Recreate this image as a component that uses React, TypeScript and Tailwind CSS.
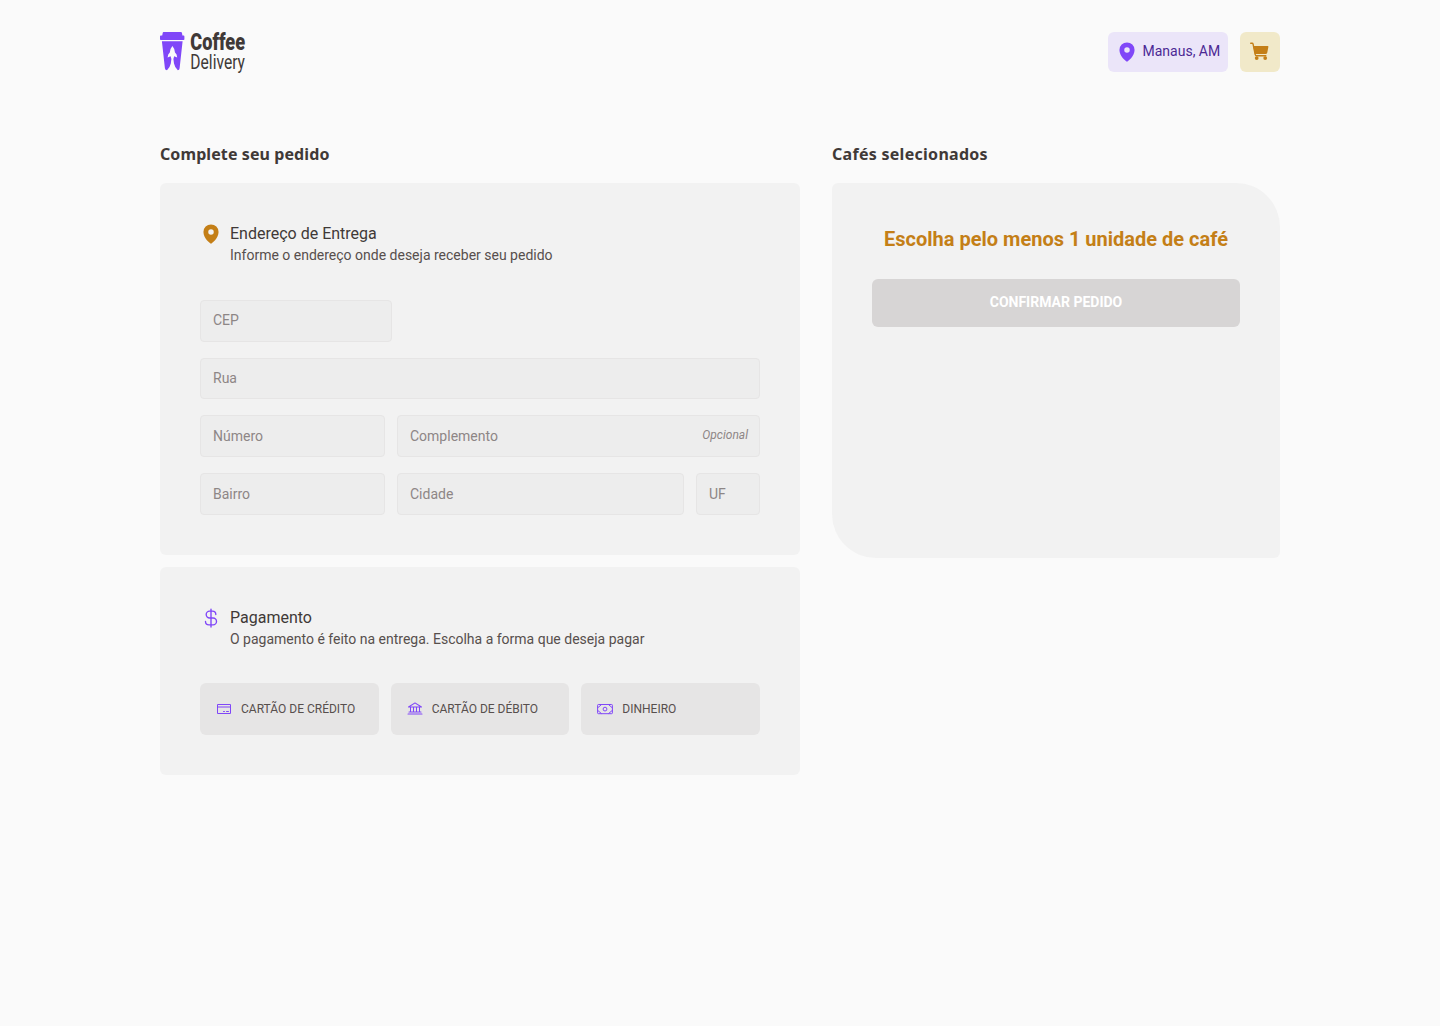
import type { ReactNode } from 'react'
import { PiBank, PiCreditCard, PiCurrencyDollar, PiMapPinFill } from 'react-icons/pi'

function Logo() {
  return (
    <svg width="86" height="44" viewBox="0 -2 86 44" className="overflow-visible" aria-label="Coffee Delivery">
      <g fill="#8047F8">
        <path d="M3.6 0H20.8Q21.8 0 22 1L22.4 3.6H23.6Q24.4 3.6 24.4 4.4V7.2Q24.4 8 23.6 8H.8Q0 8 0 7.2V4.4Q0 3.6 .8 3.6H2.2L2.7 1Q2.8 0 3.6 0Z" />
        <path
          fillRule="evenodd"
          d="M1.9 9.2H22.6L19.6 36.2Q19.4 38 17.8 38.2Q14.8 35.5 14 31.5L13.4 27H11.4L10.8 31.5Q10 35.5 7 38.2Q5.1 38 4.9 36.2ZM12.4 14Q10 16.8 9.8 20.4Q7.8 21.8 7.6 25.4L10.6 24.2L11.4 27H13.4L14.2 24.2L17.2 25.4Q17 21.8 15 20.4Q14.8 16.8 12.4 14Z"
        />
      </g>
      <g fill="#403937" fontFamily="Roboto, sans-serif">
        <text x="30.3" y="18.2" fontSize="23.5" fontWeight="900" textLength="54.8" lengthAdjust="spacingAndGlyphs">Coffee</text>
        <text x="30.3" y="36.8" fontSize="19.5" fontWeight="400" textLength="54.7" lengthAdjust="spacingAndGlyphs">Delivery</text>
      </g>
    </svg>
  )
}

function CartIcon() {
  return (
    <svg width="20" height="20" viewBox="0 0 20 20" fill="currentColor" aria-hidden="true">
      <path
        d="M.7 1.3H2.1Q2.9 1.3 3.1 2.1L5.2 12.5Q5.4 13.8 6.7 13.8H15.8"
        fill="none"
        stroke="currentColor"
        strokeWidth="1.4"
        strokeLinecap="round"
      />
      <path d="M3.2 3.9H17.7Q18.6 3.9 18.4 4.8L17.3 10.6Q17 12.1 15.5 12.1H4.8Z" />
      <circle cx="6.7" cy="16.1" r="1.9" />
      <circle cx="15.2" cy="16.1" r="1.9" />
    </svg>
  )
}

function MoneyIcon() {
  return (
    <svg width="16" height="16" viewBox="0 0 16 16" fill="none" stroke="currentColor" aria-hidden="true">
      <rect x=".6" y="3.5" width="14.8" height="9.2" rx=".8" />
      <circle cx="8" cy="8.1" r="1.9" />
      <path d="M4.6 3.5L.6 6.9M11.4 3.5L15.4 6.9M4.6 12.7L.6 9.3M11.4 12.7L15.4 9.3" />
    </svg>
  )
}

function Header() {
  return (
    <header className="flex h-[104px] items-center justify-between">
      <Logo />
      <div className="flex gap-3">
        <div className="flex h-10 w-[120px] items-center gap-1 rounded-md bg-[#EBE5F9] pl-2 text-sm text-[#4B2995]">
          <PiMapPinFill size={22} className="shrink-0 text-[#8047F8]" />
          <span className="pb-0.5 pl-[0.5px] whitespace-nowrap">Manaus, AM</span>
        </div>
        <button className="flex size-10 items-center justify-center rounded-md bg-[#F1E9C9] pr-px text-[#C47F17]">
          <CartIcon />
        </button>
      </div>
    </header>
  )
}

function Title({ children, className }: { children: ReactNode; className: string }) {
  return (
    <h2 className={`h-[43px] font-['Noto_Sans',sans-serif] text-base leading-[29px] font-bold whitespace-nowrap text-[#403937] ${className}`}>
      {children}
    </h2>
  )
}

function SectionHeader({ icon, title, text }: { icon: ReactNode; title: string; text: string }) {
  return (
    <div className="flex gap-2">
      {icon}
      <div>
        <p className="text-base leading-[21px] text-[#403937]">{title}</p>
        <p className="text-sm leading-[22px] text-[#574F4D]">{text}</p>
      </div>
    </div>
  )
}

function Field({ label, className = '', optional }: { label: string; className?: string; optional?: boolean }) {
  return (
    <div className={`relative flex h-[41.75px] ${className}`}>
      <input
        placeholder={label}
        className="h-full w-full min-w-0 rounded border border-[#E6E5E5] bg-[#EDEDED] px-3 text-sm placeholder:text-[#8D8686]"
      />
      {optional && (
        <span className="absolute top-3 right-3 text-xs leading-[17px] text-[#8D8686] italic">Opcional</span>
      )}
    </div>
  )
}

function PaymentOption({ icon, label }: { icon: ReactNode; label: string }) {
  return (
    <button className="flex h-[52px] items-center gap-[9px] rounded-md bg-[#E6E5E5] pl-4 text-xs text-[#574F4D]">
      <span className="text-[#8047F8]">{icon}</span>
      {label}
    </button>
  )
}

export default function App() {
  return (
    <div className="min-h-screen bg-[#FAFAFA] font-[Roboto,sans-serif]">
      <div className="mx-auto w-[1120px]">
        <Header />
        <main className="flex gap-8 pt-9">
          <div className="w-[640px]">
            <Title className="tracking-[0.09px]">Complete seu pedido</Title>
            <section className="h-[372px] rounded-md bg-[#F2F2F2] p-10">
              <SectionHeader
                icon={<PiMapPinFill size={22} className="text-[#C47F17]" />}
                title="Endereço de Entrega"
                text="Informe o endereço onde deseja receber seu pedido"
              />
              <div className="mt-[33.75px] flex flex-col gap-4">
                <Field label="CEP" className="w-48 [&>input]:pb-0.5" />
                <Field label="Rua" />
                <div className="flex gap-3">
                  <Field label="Número" className="w-[185px]" />
                  <Field label="Complemento" className="flex-1" optional />
                </div>
                <div className="flex gap-3">
                  <Field label="Bairro" className="w-[185px]" />
                  <Field label="Cidade" className="flex-1" />
                  <Field label="UF" className="w-16" />
                </div>
              </div>
            </section>
            <section className="mt-3 h-[208px] rounded-md bg-[#F2F2F2] p-10">
              <SectionHeader
                icon={<PiCurrencyDollar size={22} className="text-[#8047F8]" />}
                title="Pagamento"
                text="O pagamento é feito na entrega. Escolha a forma que deseja pagar"
              />
              <div className="mt-[33px] grid grid-cols-3 gap-3">
                <PaymentOption icon={<PiCreditCard size={16} />} label="CARTÃO DE CRÉDITO" />
                <PaymentOption icon={<PiBank size={16} />} label="CARTÃO DE DÉBITO" />
                <PaymentOption icon={<MoneyIcon />} label="DINHEIRO" />
              </div>
            </section>
          </div>
          <div className="w-[448px]">
            <Title className="tracking-[0.28px]">Cafés selecionados</Title>
            <section className="h-[375px] rounded-tl-md rounded-tr-[44px] rounded-br-md rounded-bl-[44px] bg-[#F2F2F2] p-10">
              <p className="text-center text-xl leading-8 font-bold text-[#C47F17]">Escolha pelo menos 1 unidade de café</p>
              <button className="mt-6 h-12 w-full rounded-md bg-[#D7D5D5] pb-0.5 text-sm font-bold text-white">
                CONFIRMAR PEDIDO
              </button>
            </section>
          </div>
        </main>
      </div>
    </div>
  )
}
